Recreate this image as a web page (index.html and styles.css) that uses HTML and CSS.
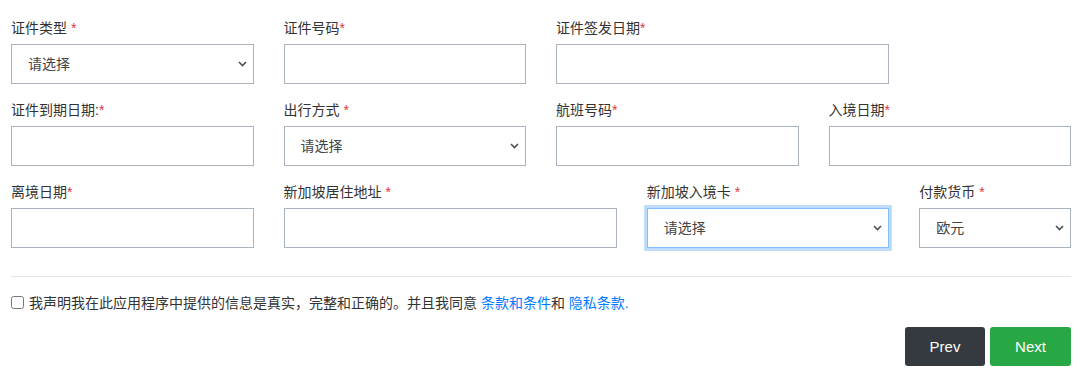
FILE: index.html
```html
<!DOCTYPE html>
<html lang="zh-CN">
<head>
  <meta charset="UTF-8">
  <meta name="viewport" content="width=device-width, initial-scale=1.0">
  <title>入境申请</title>
  <link rel="stylesheet" href="styles.css">
</head>
<body>
  <form class="form">
    <div class="grid">
      <!-- row 1 -->
      <div class="field span-3">
        <label>证件类型 <span class="req">*</span></label>
        <div class="select-wrap">
          <select class="control"><option>请选择</option></select>
          <svg class="chevron" width="9" height="6" viewBox="0 0 9 6"><path d="M1 1l3.5 3.5L8 1" fill="none" stroke="#4a4f55" stroke-width="1.6"/></svg>
        </div>
      </div>
      <div class="field span-3">
        <label>证件号码<span class="req">*</span></label>
        <input class="control" type="text">
      </div>
      <div class="field span-4">
        <label>证件签发日期<span class="req">*</span></label>
        <input class="control" type="text">
      </div>
      <div class="field span-2"></div>

      <!-- row 2 -->
      <div class="field span-3">
        <label>证件到期日期:<span class="req">*</span></label>
        <input class="control" type="text">
      </div>
      <div class="field span-3">
        <label>出行方式 <span class="req">*</span></label>
        <div class="select-wrap">
          <select class="control"><option>请选择</option></select>
          <svg class="chevron" width="9" height="6" viewBox="0 0 9 6"><path d="M1 1l3.5 3.5L8 1" fill="none" stroke="#4a4f55" stroke-width="1.6"/></svg>
        </div>
      </div>
      <div class="field span-3">
        <label>航班号码<span class="req">*</span></label>
        <input class="control" type="text">
      </div>
      <div class="field span-3">
        <label>入境日期<span class="req">*</span></label>
        <input class="control" type="text">
      </div>

      <!-- row 3 -->
      <div class="field span-3">
        <label>离境日期<span class="req">*</span></label>
        <input class="control" type="text">
      </div>
      <div class="field span-4">
        <label>新加坡居住地址 <span class="req">*</span></label>
        <input class="control" type="text">
      </div>
      <div class="field span-3">
        <label>新加坡入境卡 <span class="req">*</span></label>
        <div class="select-wrap">
          <select class="control focused"><option>请选择</option></select>
          <svg class="chevron" width="9" height="6" viewBox="0 0 9 6"><path d="M1 1l3.5 3.5L8 1" fill="none" stroke="#4a4f55" stroke-width="1.6"/></svg>
        </div>
      </div>
      <div class="field span-2">
        <label>付款货币 <span class="req">*</span></label>
        <div class="select-wrap">
          <select class="control"><option>欧元</option></select>
          <svg class="chevron" width="9" height="6" viewBox="0 0 9 6"><path d="M1 1l3.5 3.5L8 1" fill="none" stroke="#4a4f55" stroke-width="1.6"/></svg>
        </div>
      </div>
    </div>

    <hr class="divider">

    <div class="agree">
      <input type="checkbox" id="agree">
      <label for="agree">我声明我在此应用程序中提供的信息是真实，完整和正确的。并且我同意 <a href="#">条款和条件</a>和 <a href="#">隐私条款.</a></label>
    </div>

    <div class="actions">
      <button type="button" class="btn btn-dark">Prev</button>
      <button type="button" class="btn btn-green">Next</button>
    </div>
  </form>
</body>
</html>
```

FILE: styles.css
```css
body {
  margin: 0;
  font-family: "Liberation Sans", "Noto Sans CJK SC", sans-serif;
  font-size: 14px;
  color: #333;
  background: #fff;
}

.form {
  width: 1060px;
  margin-left: 11px;
}

.grid {
  display: grid;
  grid-template-columns: repeat(12, 1fr);
  column-gap: 30px;
  padding-top: 18px;
}

.span-2 { grid-column: span 2; }
.span-3 { grid-column: span 3; }
.span-4 { grid-column: span 4; }

.field {
  margin-bottom: 16px;
}

.field > label {
  display: block;
  height: 20px;
  line-height: 20px;
  margin-bottom: 6px;
  color: #333;
}

.req {
  color: #dc3545;
}

.control {
  display: block;
  box-sizing: border-box;
  width: 100%;
  height: 40px;
  margin: 0;
  padding: 0 16px;
  border: 1px solid #aab3bb;
  border-radius: 0;
  background: #fff;
  font-family: inherit;
  font-size: 14px;
  color: #444;
  outline: none;
}

select.control {
  appearance: none;
  -webkit-appearance: none;
  padding-right: 28px;
}

.select-wrap {
  position: relative;
}

.chevron {
  position: absolute;
  right: 7px;
  top: 17px;
  pointer-events: none;
}

.control.focused {
  border-color: #80bdff;
  box-shadow: 0 0 0 3px #bfdcfa;
}

.divider {
  margin: 12px 0 0;
  border: 0;
  border-top: 1px solid #e6e6e6;
}

.agree {
  display: flex;
  align-items: center;
  margin-top: 15px;
  height: 20px;
}

.agree input {
  width: 13px;
  height: 13px;
  margin: 0 5px 0 0;
}

.agree label {
  color: #333;
}

.agree a {
  color: #007bff;
  text-decoration: none;
}

.actions {
  display: flex;
  justify-content: flex-end;
  gap: 5px;
  margin-top: 15px;
}

.btn {
  height: 39px;
  border: 0;
  border-radius: 3px;
  font-family: inherit;
  font-size: 15px;
  color: #fff;
  cursor: pointer;
}

.btn-dark {
  width: 80px;
  background: #343a40;
}

.btn-green {
  width: 81px;
  background: #28a745;
}
```
